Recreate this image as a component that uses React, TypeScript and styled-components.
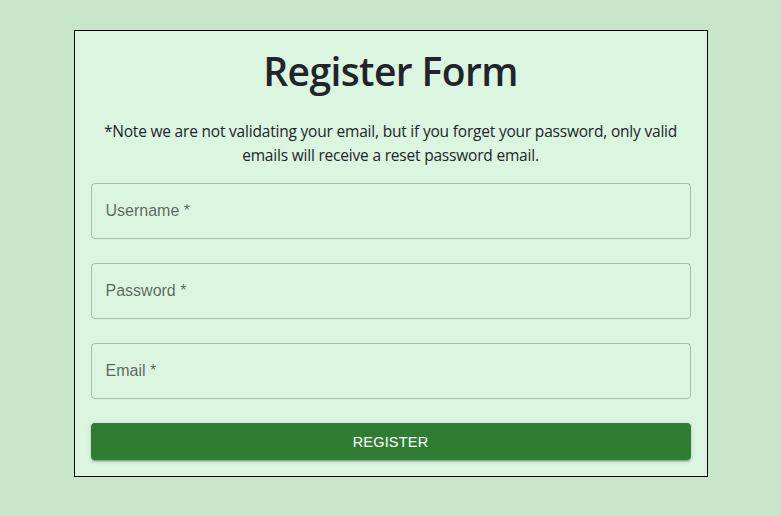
import styled, { createGlobalStyle } from "styled-components";

const GlobalStyle = createGlobalStyle`
  body {
    margin: 0;
    background-color: #c8e6c9;
    font-family: "Open Sans", sans-serif;
  }
`;

const Page = styled.main`
  display: flex;
  justify-content: center;
  padding-top: 30px;
  min-height: 516px;
  box-sizing: border-box;
`;

const Card = styled.form`
  display: flex;
  flex-direction: column;
  width: 634px;
  box-sizing: border-box;
  padding: 16px;
  border: 1px solid #000;
  background-color: #dcf5e0;
  height: fit-content;
`;

const Title = styled.h1`
  margin: 0 0 24px;
  font-size: 39px;
  line-height: 48px;
  font-weight: 600;
  letter-spacing: -0.6px;
  color: #212529;
  text-align: center;
`;

const Note = styled.p`
  margin: 0 0 16px;
  font-size: 15.5px;
  line-height: 24px;
  letter-spacing: -0.2px;
  color: #212529;
  text-align: center;
`;

const Field = styled.input`
  height: 56px;
  box-sizing: border-box;
  margin: 0 0 24px;
  padding: 0 14px;
  border: 1px solid rgba(0, 0, 0, 0.23);
  border-radius: 4px;
  background: transparent;
  font-family: "Liberation Sans", Arial, sans-serif;
  font-size: 16px;
  color: rgba(0, 0, 0, 0.87);
  outline: none;

  &::placeholder {
    color: rgba(0, 0, 0, 0.6);
  }
`;

const SubmitButton = styled.button`
  height: 37px;
  border: none;
  border-radius: 4px;
  background-color: #2e7d32;
  color: #fff;
  font-family: "Liberation Sans", Arial, sans-serif;
  font-size: 14.5px;
  font-weight: 400;
  letter-spacing: 0.2px;
  text-transform: uppercase;
  box-shadow: 0 3px 1px -2px rgba(0, 0, 0, 0.2), 0 2px 2px 0 rgba(0, 0, 0, 0.14),
    0 1px 5px 0 rgba(0, 0, 0, 0.12);
  cursor: pointer;
`;

export default function App() {
  return (
    <>
      <GlobalStyle />
      <Page>
        <Card onSubmit={(e) => e.preventDefault()}>
          <Title>Register Form</Title>
          <Note>
            *Note we are not validating your email, but if you forget your
            password, only valid emails will receive a reset password email.
          </Note>
          <Field placeholder="Username *" />
          <Field placeholder="Password *" type="password" />
          <Field placeholder="Email *" type="email" />
          <SubmitButton type="submit">Register</SubmitButton>
        </Card>
      </Page>
    </>
  );
}
